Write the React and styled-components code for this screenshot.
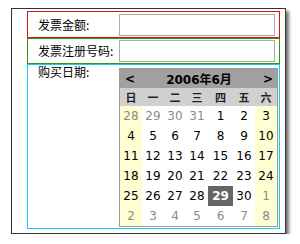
import React from "react";
import styled, { createGlobalStyle } from "styled-components";

const Global = createGlobalStyle`
  html, body {
    margin: 0;
    background: #fff;
  }
  body {
    font-family: "DejaVu Sans", "Noto Sans CJK SC", sans-serif;
  }
`;

const Frame = styled.div`
  margin: 8px 0 0 11px;
  width: 258px;
  height: 222px;
  border: 1px solid #333;
  box-shadow: 3px 3px 3px #777;
  padding: 2px 0 0 15px;
`;

const Row = styled.div`
  display: flex;
  align-items: ${(p) => (p.$top ? "flex-start" : "center")};
  width: 251px;
  height: ${(p) => p.$h}px;
  border: 1px solid ${(p) => p.$color};
`;

const Label = styled.div`
  width: 81px;
  padding-left: 10px;
  flex: none;
  font-family: "Noto Sans CJK SC", sans-serif;
  font-size: 12px;
  line-height: 14px;
  color: #000;
`;

const Input = styled.div`
  width: 154px;
  height: 20px;
  border: 1px solid #ababab;
  background: #fff;
`;

const Calendar = styled.div`
  margin-top: 3px;
  width: 157px;
  border: 1px solid #9a9a9a;
  background: #fff;
`;

const Head = styled.div`
  display: flex;
  align-items: center;
  justify-content: space-between;
  height: 19px;
  padding: 0 4px 0 5px;
  background: #a0a0a0;
  font-weight: bold;
  font-size: 12px;
  color: #000;
`;

const Grid = styled.div`
  display: grid;
  grid-template-columns: repeat(7, 1fr);
  grid-template-rows: 18px repeat(6, 20px);
`;

const DayName = styled.div`
  display: flex;
  align-items: center;
  justify-content: center;
  background: #d0d0d0;
  font-family: "Noto Sans CJK SC", sans-serif;
  font-weight: bold;
  font-size: 11px;
  color: #222;
`;

const Cell = styled.div`
  display: flex;
  align-items: center;
  justify-content: center;
  font-size: 12px;
  background: ${(p) => (p.$weekend ? "#ffffd4" : "#fff")};
  color: ${(p) => (p.$other ? "#8a8a8a" : "#000")};
`;

const Selected = styled.span`
  display: flex;
  align-items: center;
  justify-content: center;
  width: 25px;
  height: 21px;
  background: #666;
  color: #fff;
  font-weight: bold;
`;

const names = ["日", "一", "二", "三", "四", "五", "六"];

const days = [];
[28, 29, 30, 31].forEach((d) => days.push({ d, other: true }));
for (let d = 1; d <= 30; d++) days.push({ d });
for (let d = 1; d <= 8; d++) days.push({ d, other: true });

const App = () => (
  <>
    <Global />
    <Frame>
      <Row $color="#e01010" $h={25}>
        <Label>发票金额:</Label>
        <Input />
      </Row>
      <Row $color="#2a9a10" $h={24}>
        <Label>发票注册号码:</Label>
        <Input />
      </Row>
      <Row $color="#10d0f0" $h={163} $top>
        <Label>购买日期:</Label>
        <Calendar>
          <Head>
            <span>&lt;</span>
            <span>2006年6月</span>
            <span>&gt;</span>
          </Head>
          <Grid>
            {names.map((n) => (
              <DayName key={n}>{n}</DayName>
            ))}
            {days.map((x, i) => (
              <Cell
                key={i}
                $weekend={i % 7 === 0 || i % 7 === 6}
                $other={x.other}
              >
                {!x.other && x.d === 29 ? <Selected>29</Selected> : x.d}
              </Cell>
            ))}
          </Grid>
        </Calendar>
      </Row>
    </Frame>
  </>
);

export default App;
